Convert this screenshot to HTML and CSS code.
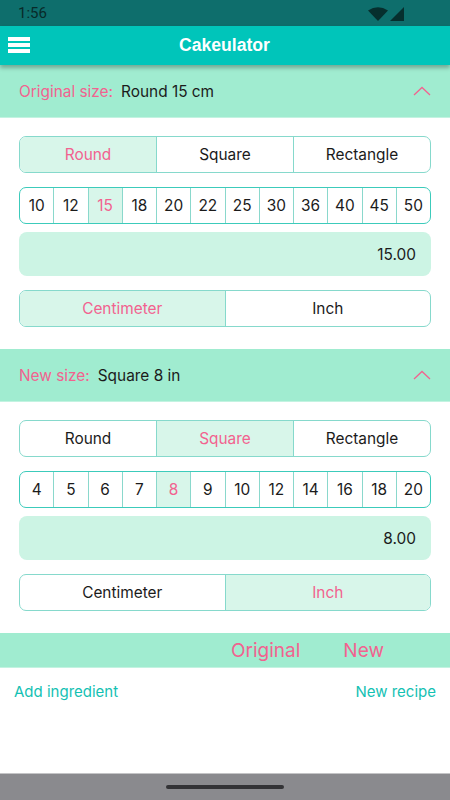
FILE: index.html
```html
<!DOCTYPE html>
<html>
<head>
<meta charset="utf-8">
<link rel="stylesheet" href="styles.css">
</head>
<body>
<div class="screen">
  <div class="status">
    <span class="time">1:56</span>
    <span class="status-icons">
      <svg width="20" height="14" viewBox="0 0 20 14"><path d="M0 3.5 Q10 -3 20 3.5 L10 14 Z" fill="#062f2e"/></svg>
      <svg width="14" height="14" viewBox="0 0 14 14"><path d="M14 0 L14 14 L0 14 Z" fill="#062f2e"/></svg>
    </span>
  </div>
  <div class="appbar">
    <div class="menu"><span></span><span></span><span></span></div>
    <div class="title">Cakeulator</div>
  </div>

  <div class="section-header">
    <span class="label">Original size:</span><span class="value">Round 15 cm</span>
    <svg class="chev" width="18" height="10" viewBox="0 0 18 10"><path d="M1 9 L9 1.5 L17 9" fill="none" stroke="#f2628f" stroke-width="1.3"/></svg>
  </div>
  <div class="panel">
    <div class="seg seg3">
      <div class="cell on">Round</div><div class="cell">Square</div><div class="cell">Rectangle</div>
    </div>
    <div class="seg nums">
      <div class="cell">10</div><div class="cell">12</div><div class="cell on">15</div><div class="cell">18</div><div class="cell">20</div><div class="cell">22</div><div class="cell">25</div><div class="cell">30</div><div class="cell">36</div><div class="cell">40</div><div class="cell">45</div><div class="cell">50</div>
    </div>
    <div class="input">15.00</div>
    <div class="seg seg2 units">
      <div class="cell on">Centimeter</div><div class="cell">Inch</div>
    </div>
  </div>

  <div class="section-header">
    <span class="label">New size:</span><span class="value">Square 8 in</span>
    <svg class="chev" width="18" height="10" viewBox="0 0 18 10"><path d="M1 9 L9 1.5 L17 9" fill="none" stroke="#f2628f" stroke-width="1.3"/></svg>
  </div>
  <div class="panel">
    <div class="seg seg3">
      <div class="cell">Round</div><div class="cell on">Square</div><div class="cell">Rectangle</div>
    </div>
    <div class="seg nums">
      <div class="cell">4</div><div class="cell">5</div><div class="cell">6</div><div class="cell">7</div><div class="cell on">8</div><div class="cell">9</div><div class="cell">10</div><div class="cell">12</div><div class="cell">14</div><div class="cell">16</div><div class="cell">18</div><div class="cell">20</div>
    </div>
    <div class="input">8.00</div>
    <div class="seg seg2 units">
      <div class="cell">Centimeter</div><div class="cell on">Inch</div>
    </div>
  </div>

  <div class="table-head">
    <span class="col">Original</span><span class="col col-new">New</span>
  </div>
  <div class="links">
    <span>Add ingredient</span><span>New recipe</span>
  </div>
  <div class="spacer"></div>
  <div class="navbar"><span class="handle"></span></div>
</div>
</body>
</html>
```
FILE: styles.css
```css
* { box-sizing: border-box; }
html, body { margin: 0; padding: 0; }
body { font-family: Inter, "Noto Sans", sans-serif; background: #fff; color: #1b1b1b; }
.screen { width: 450px; height: 800px; display: flex; flex-direction: column; overflow: hidden; }

.status { height: 26px; flex: none; background: #0e6e6c; display: flex; align-items: center; justify-content: space-between; padding: 0 46px 0 18px; }
.time { font-family: Roboto, sans-serif; font-size: 15px; color: #082a29; }
.status-icons { display: flex; align-items: center; gap: 2px; padding-top: 1px; }

.appbar { height: 39px; flex: none; background: #00c5ba; display: flex; align-items: center; position: relative; box-shadow: 0 3px 4px rgba(0,0,0,0.28); z-index: 2; }
.menu { position: absolute; left: 8px; top: 11px; display: flex; flex-direction: column; gap: 2px; }
.menu span { display: block; width: 22px; height: 4px; background: #fff; }
.title { flex: 1; text-align: center; color: #fff; font-weight: 700; font-size: 17.6px; font-family: "Liberation Sans", Arial, sans-serif; padding-right: 1px; }

.section-header { height: 53px; flex: none; background: #a0ecd0; display: flex; align-items: center; padding: 0 19px; font-size: 15.4px; position: relative; border-bottom: 1px solid #c3f3e1; }
.section-header .label { color: #f2628f; margin-right: 8px; }
.section-header .value { color: #1b1b1b; }
.chev { position: absolute; right: 19px; top: 21px; }

.panel { padding: 18px 19px 22px; display: flex; flex-direction: column; flex: none; }

.seg { display: flex; height: 37px; border: 1px solid #86d9cc; border-radius: 7px; overflow: hidden; }
.seg .cell { flex: 1; display: flex; align-items: center; justify-content: center; font-size: 15.4px; color: #1b1b1b; border-left: 1px solid #86d9cc; }
.seg .cell:first-child { border-left: none; }
.seg .cell.on { background: #d8f6ea; color: #f2628f; }
.nums { margin-top: 14px; height: 37px; border-color: #3ccbbb; }
.nums .cell { border-left-color: #8ad8cc; }
.input { margin-top: 8px; height: 44px; background: #ccf4e4; border-radius: 8px; display: flex; align-items: center; justify-content: flex-end; padding-right: 15px; font-size: 15.4px; color: #1b1b1b; }
.units { margin-top: 14px; }

.table-head { height: 35px; flex: none; background: #a0ecd0; display: flex; align-items: center; font-size: 19px; color: #f2628f; border-bottom: 1px solid #c3f3e1; }
.col { margin-left: 231px; }
.col-new { margin-left: 43px; }

.links { display: flex; justify-content: space-between; padding: 14px 14px 0; font-size: 15px; color: #14c1b3; }
.spacer { flex: 1; }
.navbar { height: 27px; flex: none; background: #8a8a8e; border-top: 1px solid #c4c4c6; display: flex; justify-content: center; padding-top: 11px; }
.handle { width: 118px; height: 4px; border-radius: 2px; background: #333336; }
```
